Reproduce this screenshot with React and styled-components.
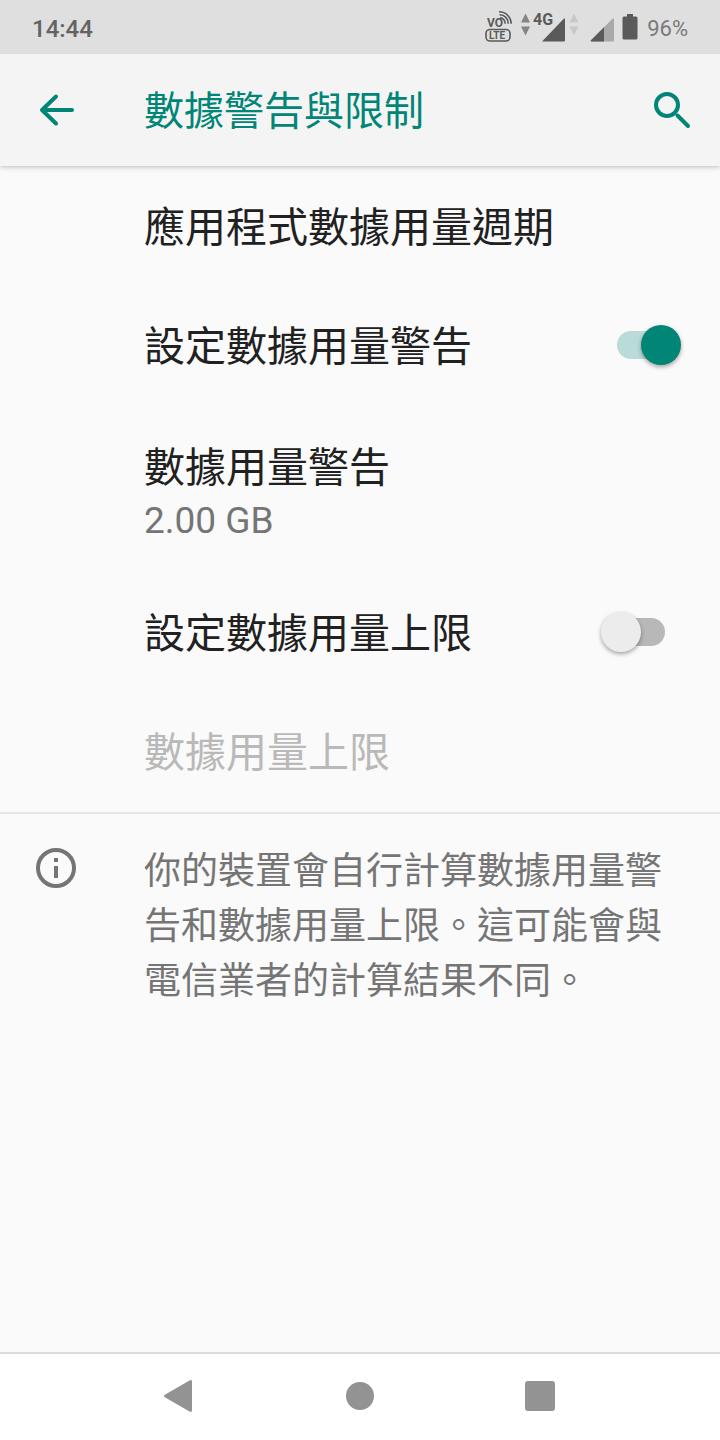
import { useState } from "react";
import styled, { createGlobalStyle } from "styled-components";

const TEAL = "#008577";
const GREY = "#757575";

const GlobalStyle = createGlobalStyle`
    * {
        box-sizing: border-box;
    }
    body {
        margin: 0;
        background-color: #fafafa;
        font-family: Roboto, "Noto Sans CJK TC", sans-serif;
    }
`
const Page = styled.div`
    display: flex;
    flex-direction: column;
    min-height: 100vh;
`
const StatusBar = styled.div`
    position: relative;
    z-index: 1;
    display: flex;
    align-items: center;
    justify-content: space-between;
    height: 54px;
    padding: 0 32px;
    background-color: #dfdfdf;
`
const Clock = styled.span`
    padding-top: 3px;
    color: #636363;
    font-size: 24px;
    font-weight: 500;
    line-height: 32px;
`
const StatusIcons = styled.div`
    display: flex;
    align-items: center;
    gap: 8px;
`
const StatusIcon = styled.svg`
    display: block;
    height: 54px;
    font-family: Roboto, sans-serif;
    font-weight: 700;
    fill: #5a5a5a;
`
const Percent = styled.span`
    padding-top: 3px;
    color: #7a7a7a;
    font-size: 22px;
    line-height: 32px;
`
const Header = styled.header`
    display: flex;
    align-items: center;
    height: 112px;
    padding: 0 28px 0 36px;
    background-color: #f4f4f4;
    box-shadow: 0 1px 5px rgba(0, 0, 0, 0.25);
`
const IconButton = styled.button`
    display: flex;
    padding: 0;
    border: 0;
    background: none;
    color: ${TEAL};
    cursor: pointer;
`
const Title = styled.h1`
    flex: 1;
    margin: 0 0 0 68px;
    padding-top: 4px;
    color: ${TEAL};
    font-size: 40px;
    font-weight: 400;
    line-height: 60px;
`
const Content = styled.main`
    flex: 1;
`
const List = styled.div`
    padding-top: 2px;
    border-bottom: 2px solid #e6e6e6;
`
const Row = styled.div`
    display: flex;
    align-items: center;
    justify-content: space-between;
    min-height: ${({ $tall }) => ($tall ? 168 : 119)}px;
    padding: 1px 39px 0 144px;
    color: ${({ $disabled }) => ($disabled ? "#b9b9b9" : "#212121")};
    font-size: 41px;
    line-height: 60px;
`
const Summary = styled.div`
    color: ${GREY};
    font-size: 37px;
    line-height: 46px;
`
const Switch = styled.span`
    position: relative;
    flex: none;
    width: 80px;
    height: 40px;
    margin-bottom: 4px;
    padding: 6px 16px;
`
const SwitchInput = styled.input`
    position: absolute;
    inset: 0;
    z-index: 1;
    width: 100%;
    height: 100%;
    margin: 0;
    opacity: 0;
    cursor: pointer;
`
const Track = styled.span`
    display: block;
    height: 28px;
    border-radius: 14px;
    background-color: ${({ $on }) => ($on ? "#b9dcd8" : "#b8b8b8")};
`
const Thumb = styled.span`
    position: absolute;
    top: 0;
    left: ${({ $on }) => ($on ? 40 : 0)}px;
    width: 40px;
    height: 40px;
    border-radius: 50%;
    background-color: ${({ $on }) => ($on ? TEAL : "#ececec")};
    box-shadow: 0 2px 4px rgba(0, 0, 0, 0.35);
`
const Info = styled.section`
    display: flex;
    align-items: flex-start;
    gap: 68px;
    padding: 30px 32px 30px 36px;
    color: ${GREY};
`
const InfoIcon = styled.svg`
    flex: none;
    margin-top: 4px;
`
const InfoText = styled.p`
    margin: 0;
    font-size: 37px;
    line-height: 55px;
`
const NavBar = styled.nav`
    display: flex;
    justify-content: center;
    height: 88px;
    padding-bottom: 2px;
    border-top: 2px solid #dcdcdc;
    background-color: #fff;
`
const NavButton = styled.button`
    display: flex;
    align-items: center;
    justify-content: center;
    width: 25%;
    padding: 0;
    border: 0;
    background: none;
    color: #939393;
    cursor: pointer;
`

const VolteIcon = () => (
    <StatusIcon width="28" viewBox="0 0 28 54" aria-hidden="true">
        <text x="2" y="27" fontSize="12">VO</text>
        <g fill="none" stroke="#5a5a5a" strokeWidth="1.6">
            <path d="M15 17.800a5.500 5.500 0 0 1 5.200 6" />
            <path d="M14.500 14.800a8.500 8.500 0 0 1 8.700 9" />
            <path d="M14 11.800a12 12 0 0 1 12.200 12" />
            <rect x="1" y="29.500" width="24" height="11.500" rx="4" />
        </g>
        <text x="4" y="39" fontSize="10">LTE</text>
    </StatusIcon>
)

const MobileDataIcon = () => (
    <StatusIcon width="61" viewBox="0 0 61 54" aria-hidden="true">
        <path d="M4.500 13.500l4.500 9H0zM4.500 35.500L0 26.500h9z" fill="#858585" />
        <text x="12" y="25" fontSize="16">4G</text>
        <path d="M21 41.500h22a1 1 0 0 0 1-1V19.500q0-2-1.500-.6z" />
        <path d="M53 13.500l4.500 9h-9zM53 35.500l-4.500-9h9z" fill="#c9c9c9" />
    </StatusIcon>
)

const SignalIcon = () => (
    <StatusIcon width="24" viewBox="0 0 24 54" aria-hidden="true">
        <path d="M1.500 41.500H22.500a1.500 1.500 0 0 0 1.500-1.500V19.500q0-2-1.500-.8L1 40.200q-.6 1.300.5 1.300z" fill="#a9a9a9" />
        <path d="M1.500 41.500H14V27.200L1 40.200q-.6 1.300.5 1.300z" />
    </StatusIcon>
)

const BatteryIcon = () => (
    <StatusIcon width="17" viewBox="0 0 17 54" aria-hidden="true">
        <path d="M5 14h6v2.500h3A1.500 1.500 0 0 1 15.500 18v20a1.500 1.500 0 0 1-1.500 1.500H2A1.500 1.500 0 0 1 .5 38V18A1.500 1.500 0 0 1 2 16.500h3z" />
    </StatusIcon>
)

const BackIcon = () => (
    <svg width="40" height="40" fill="none" stroke="currentColor" strokeWidth="4" strokeLinecap="round" strokeLinejoin="round">
        <path d="M36 20H6M20 6.500L6 20l14 13.500" />
    </svg>
)

const SearchIcon = () => (
    <svg width="40" height="40" fill="none" stroke="currentColor" strokeWidth="4" strokeLinecap="round">
        <circle cx="15" cy="15" r="11" />
        <path d="M25.500 25.500L36 36" />
    </svg>
)

const ToggleRow = ({ id, label, defaultOn }) => {
    const [on, setOn] = useState(defaultOn)
    return (
        <Row>
            <label htmlFor={id}>{label}</label>
            <Switch>
                <SwitchInput id={id} type="checkbox" checked={on} onChange={() => setOn(!on)} />
                <Track $on={on} />
                <Thumb $on={on} />
            </Switch>
        </Row>
    )
}

const App = () => {
    return (
        <Page lang="zh-Hant-TW">
            <GlobalStyle />
            <StatusBar>
                <Clock>14:44</Clock>
                <StatusIcons>
                    <VolteIcon />
                    <MobileDataIcon />
                    <SignalIcon />
                    <BatteryIcon />
                    <Percent>96%</Percent>
                </StatusIcons>
            </StatusBar>
            <Header>
                <IconButton aria-label="返回"><BackIcon /></IconButton>
                <Title>數據警告與限制</Title>
                <IconButton aria-label="搜尋"><SearchIcon /></IconButton>
            </Header>
            <Content>
                <List>
                    <Row>應用程式數據用量週期</Row>
                    <ToggleRow id="warning" label="設定數據用量警告" defaultOn={true} />
                    <Row $tall>
                        <div>
                            數據用量警告
                            <Summary>2.00 GB</Summary>
                        </div>
                    </Row>
                    <ToggleRow id="limit" label="設定數據用量上限" defaultOn={false} />
                    <Row $disabled>數據用量上限</Row>
                </List>
                <Info>
                    <InfoIcon width="40" height="40" aria-hidden="true">
                        <circle cx="20" cy="20" r="18" fill="none" stroke="currentColor" strokeWidth="4" />
                        <path d="M18 10h4v4h-4zM18 18h4v12h-4z" fill="currentColor" />
                    </InfoIcon>
                    <InfoText>你的裝置會自行計算數據用量警告和數據用量上限。這可能會與電信業者的計算結果不同。</InfoText>
                </Info>
            </Content>
            <NavBar>
                <NavButton aria-label="上一頁">
                    <svg width="32" height="32" fill="currentColor">
                        <path d="M.8 14.800L25.500.4Q28-.6 28 1.500v29q0 2.100-2.500 1.100L.8 17.200q-1.600-1.200 0-2.400z" />
                    </svg>
                </NavButton>
                <NavButton aria-label="主畫面">
                    <svg width="28" height="28" fill="currentColor">
                        <circle cx="14" cy="14" r="14" />
                    </svg>
                </NavButton>
                <NavButton aria-label="最近使用">
                    <svg width="30" height="30" fill="currentColor">
                        <rect width="30" height="30" rx="3" />
                    </svg>
                </NavButton>
            </NavBar>
        </Page>
    );
}

export default App;
